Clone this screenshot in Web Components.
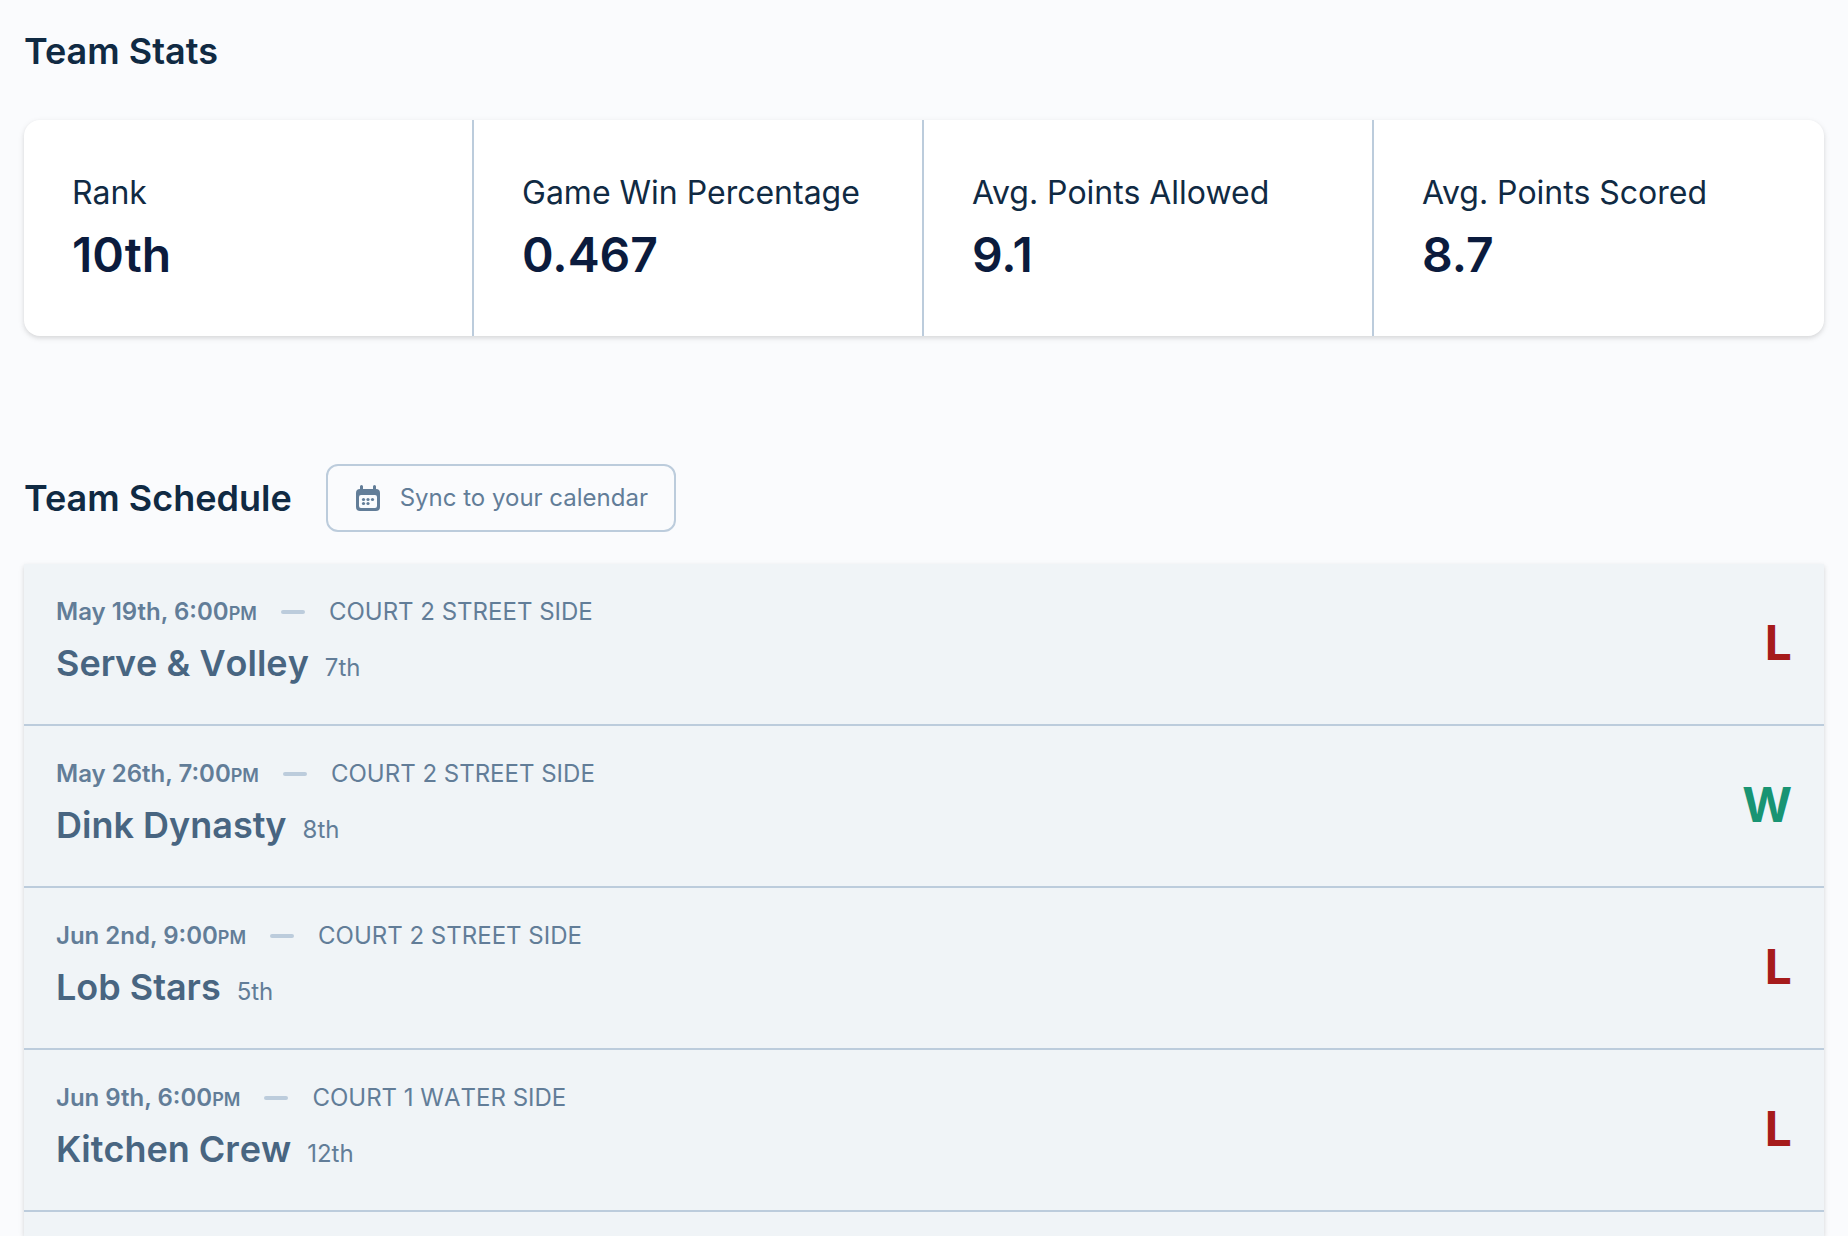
<!DOCTYPE html>
<html lang="en">
<head>
<meta charset="utf-8">
<meta name="viewport" content="width=device-width, initial-scale=1">
<title>Team</title>
<style>
  :root {
    --ink: #102a43;
    --value: #0b1b3d;
    --name: #486581;
    --muted: #627d98;
    --line: #bcccdc;
    --row: #f0f4f7;
    --shadow: 0 2px 6px rgba(0, 0, 0, 0.1), 0 2px 4px rgba(0, 0, 0, 0.06);
  }
  body {
    margin: 0;
    background: #fafbfd;
    color: var(--ink);
    font-family: Inter, "Liberation Sans", sans-serif;
    font-size: 24px;
  }
</style>
</head>
<body>
<team-page>
  <section-title>Team Stats</section-title>
  <stat-group>
    <stat-card label="Rank">10th</stat-card>
    <stat-card label="Game Win Percentage">0.467</stat-card>
    <stat-card label="Avg. Points Allowed">9.1</stat-card>
    <stat-card label="Avg. Points Scored">8.7</stat-card>
  </stat-group>
  <section-title slot="schedule">Team Schedule
    <sync-button slot="action">Sync to your calendar</sync-button>
  </section-title>
  <match-list slot="schedule">
    <match-row date="May 19th, 6:00" period="PM" court="COURT 2 STREET SIDE" rank="7th" result="L">Serve &amp; Volley</match-row>
    <match-row date="May 26th, 7:00" period="PM" court="COURT 2 STREET SIDE" rank="8th" result="W">Dink Dynasty</match-row>
    <match-row date="Jun 2nd, 9:00" period="PM" court="COURT 2 STREET SIDE" rank="5th" result="L">Lob Stars</match-row>
    <match-row date="Jun 9th, 6:00" period="PM" court="COURT 1 WATER SIDE" rank="12th" result="L">Kitchen Crew</match-row>
  </match-list>
</team-page>
<script>
class BaseElement extends HTMLElement {
  connectedCallback() {
    if (this.shadowRoot) return;
    this.attachShadow({ mode: "open" }).innerHTML = this.render();
  }
}

customElements.define("team-page", class extends BaseElement {
  render() {
    return `<style>
      :host { display: flex; flex-direction: column; gap: 128px; box-sizing: border-box; min-height: 100vh; padding: 24px 24px 0; }
      section { display: flex; flex-direction: column; gap: 42px; }
      .schedule { flex: 1; gap: 32px; }
    </style>
    <section><slot></slot></section>
    <section class="schedule"><slot name="schedule"></slot></section>`;
  }
});

customElements.define("section-title", class extends BaseElement {
  render() {
    return `<style>
      :host { display: flex; align-items: center; gap: 34px; }
      h2 { margin: 0; font-size: 36px; line-height: 54px; font-weight: 600; }
    </style>
    <h2><slot></slot></h2><slot name="action"></slot>`;
  }
});

customElements.define("stat-group", class extends BaseElement {
  render() {
    return `<style>
      :host { display: grid; grid-template-columns: repeat(4, minmax(0, 1fr)); background: #fff; border-radius: 16px; box-shadow: var(--shadow); overflow: hidden; }
      ::slotted(:not(:last-child)) { border-right: 2px solid var(--line); }
    </style>
    <slot></slot>`;
  }
});

customElements.define("stat-card", class extends BaseElement {
  render() {
    return `<style>
      :host { display: block; padding: 49px 48px 51px; }
      dl, dd { margin: 0; }
      dl { display: flex; flex-direction: column; gap: 8px; }
      dt { font-size: 32px; line-height: 48px; white-space: nowrap; }
      dd { font-size: 48px; line-height: 60px; font-weight: 600; color: var(--value); }
    </style>
    <dl><dt>${this.getAttribute("label")}</dt><dd><slot></slot></dd></dl>`;
  }
});

customElements.define("sync-button", class extends BaseElement {
  render() {
    return `<style>
      :host { display: block; }
      button { display: flex; align-items: center; gap: 20px; padding: 14px 26px 14px 28px; border: 2px solid var(--line); border-radius: 12px; background: transparent; color: var(--muted); font: inherit; font-size: 24px; line-height: 36px; cursor: pointer; }
      svg { width: 24px; height: 26px; flex: none; }
    </style>
    <button type="button">
      <svg viewBox="0 0 24 26" aria-hidden="true">
        <path fill="currentColor" fill-rule="evenodd" d="M4 1.500a1.500 1.500 0 0 1 3 0V4h10V1.500a1.500 1.500 0 0 1 3 0V4a4 4 0 0 1 4 4v14a4 4 0 0 1-4 4H4a4 4 0 0 1-4-4V8a4 4 0 0 1 4-4zM5 10a2 2 0 0 0-2 2v9a2 2 0 0 0 2 2h14a2 2 0 0 0 2-2v-9a2 2 0 0 0-2-2z"/>
        <g fill="currentColor"><circle cx="7.500" cy="14.500" r="1.600"/><circle cx="12" cy="14.500" r="1.600"/><circle cx="16.500" cy="14.500" r="1.600"/><circle cx="7.500" cy="18.500" r="1.600"/><circle cx="12" cy="18.500" r="1.600"/></g>
      </svg>
      <span><slot></slot></span>
    </button>`;
  }
});

customElements.define("match-list", class extends BaseElement {
  render() {
    return `<style>
      :host { display: block; flex: 1; background: var(--row); box-shadow: var(--shadow); }
    </style>
    <div role="list"><slot></slot></div>`;
  }
});

customElements.define("match-row", class extends BaseElement {
  render() {
    const result = this.getAttribute("result");
    this.setAttribute("role", "listitem");
    return `<style>
      :host { display: flex; align-items: center; justify-content: space-between; padding: 29px 32px 31px; border-bottom: 2px solid var(--line); color: var(--muted); }
      .info { display: flex; flex-direction: column; gap: 5px; padding-bottom: 3px; }
      .when { display: flex; align-items: center; gap: 24px; line-height: 38px; }
      time { font-weight: 600; }
      small { font-size: 18px; line-height: 1; }
      .dash { width: 24px; height: 4px; border-radius: 2px; background: var(--line); }
      .court, h3 { font-kerning: none; }
      .team { display: flex; align-items: baseline; gap: 16px; }
      h3 { margin: 0; font-size: 36px; line-height: 54px; font-weight: 600; color: var(--name); }
      .result { font-size: 48px; line-height: 72px; font-weight: 700; color: #a61b1b; }
      .win { color: #199473; }
    </style>
    <div class="info">
      <div class="when"><time>${this.getAttribute("date")}<small>${this.getAttribute("period")}</small></time><span class="dash"></span><span class="court">${this.getAttribute("court")}</span></div>
      <div class="team"><h3><slot></slot></h3><span>${this.getAttribute("rank")}</span></div>
    </div>
    <strong class="result${result === "W" ? " win" : ""}">${result}</strong>`;
  }
});
</script>
</body>
</html>
